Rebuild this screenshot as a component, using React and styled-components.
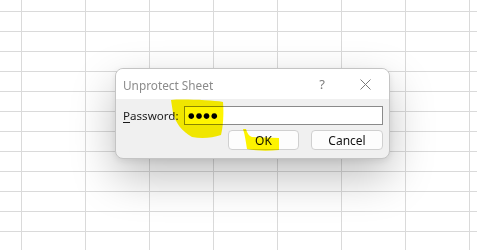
import React from "react";
import styled, { createGlobalStyle } from "styled-components";

const GlobalStyle = createGlobalStyle`
    html, body {
        margin: 0;
        padding: 0;
        background: #ffffff;
    }
`;

/* spreadsheet grid behind the dialog */
const Sheet = styled.div`
    width: 477px;
    height: 250px;
    box-sizing: border-box;
    padding: 68px 0 0 115px;
    background-color: #ffffff;
    background-image:
        linear-gradient(to right, #dadada 1px, transparent 1px),
        linear-gradient(to bottom, #dadada 1px, transparent 1px);
    background-size: 64px 20px;
    background-position: 21px 11px;
    font-family: "Noto Sans", "Open Sans", sans-serif;
    overflow: hidden;
`;

const Dialog = styled.div`
    position: relative;
    width: 275px;
    height: 91px;
    box-sizing: border-box;
    border: 1px solid #c4c4c4;
    border-radius: 8px;
    background: #f0f0f0;
    box-shadow: 0 18px 44px rgba(0, 0, 0, 0.25), 0 2px 6px rgba(0, 0, 0, 0.08);
    overflow: hidden;
    display: flex;
    flex-direction: column;
`;

const TitleBar = styled.div`
    height: 30px;
    background: #ffffff;
    display: flex;
    align-items: center;
    padding: 0 18px 0 7px;
    color: #8b8b8b;
    font-size: 11.8px;
`;

const Title = styled.span`
    flex: 1;
    padding-top: 1px;
`;

const HelpMark = styled.span`
    font-size: 13px;
    color: #7d7d7d;
    margin-right: 35px;
`;

const Body = styled.div`
    flex: 1;
    padding: 7px 6px 0 7px;
    display: flex;
    flex-direction: column;
    gap: 5px;
`;

const Row = styled.div`
    display: flex;
    align-items: center;
    justify-content: ${(p) => (p.$end ? "flex-end" : "space-between")};
    gap: ${(p) => (p.$end ? "12px" : "0")};
`;

const Label = styled.label`
    font-size: 11.6px;
    color: #1a1a1a;
    u {
        text-decoration: underline;
        text-underline-offset: 2px;
    }
`;

const Field = styled.div`
    width: 199px;
    height: 19px;
    box-sizing: border-box;
    border: 1px solid #8a8a8a;
    background: #ffffff;
    display: flex;
    align-items: center;
    padding-left: 3px;
    font-family: "DejaVu Sans", sans-serif;
    font-size: 7.5px;
    letter-spacing: 1.1px;
    color: #000;
`;

const Button = styled.button`
    width: ${(p) => p.$w || 72}px;
    height: 20px;
    box-sizing: border-box;
    border: 1px solid #d0d0d0;
    border-radius: 4px;
    background: #fdfdfd;
    font-family: "Noto Sans", "Open Sans", sans-serif;
    font-size: 12px;
    color: #111;
    padding: 0;
`;

/* marker scribbles drawn over the dialog */
const Marker = styled.svg`
    position: absolute;
    left: 0;
    top: 0;
    z-index: 2;
    mix-blend-mode: multiply;
    pointer-events: none;
`;

export default function App() {
    return (
        <>
            <GlobalStyle />
            <Sheet>
                <Dialog>
                    <TitleBar>
                        <Title>Unprotect Sheet</Title>
                        <HelpMark>?</HelpMark>
                        <svg width="11" height="11" viewBox="0 0 11 11">
                            <path d="M0.5 0.5 L10.5 10.5 M10.5 0.5 L0.5 10.5" stroke="#7a7a7a" strokeWidth="1" fill="none" />
                        </svg>
                    </TitleBar>
                    <Body>
                        <Row>
                            <Label>
                                <u>P</u>assword:
                            </Label>
                            <Field>●●●●</Field>
                        </Row>
                        <Row $end>
                            <Button $w={71}>OK</Button>
                            <Button $w={72}>Cancel</Button>
                        </Row>
                    </Body>
                    <Marker width="275" height="91" viewBox="0 0 275 91">
                        <path
                            d="M55 31 C66 30 95 31 107 33 C108 45 107 58 105 66 C96 69 86 70 76 68 C66 62 60 55 57 44 Z"
                            fill="#fff500"
                        />
                        <path
                            d="M127 60 L130 60 C131 64 133 67 136 68 L163 69 L163 81 C152 82 141 82 131 80 C130 74 129 66 127 60 Z"
                            fill="#fff500"
                        />
                    </Marker>
                </Dialog>
            </Sheet>
        </>
    );
}
